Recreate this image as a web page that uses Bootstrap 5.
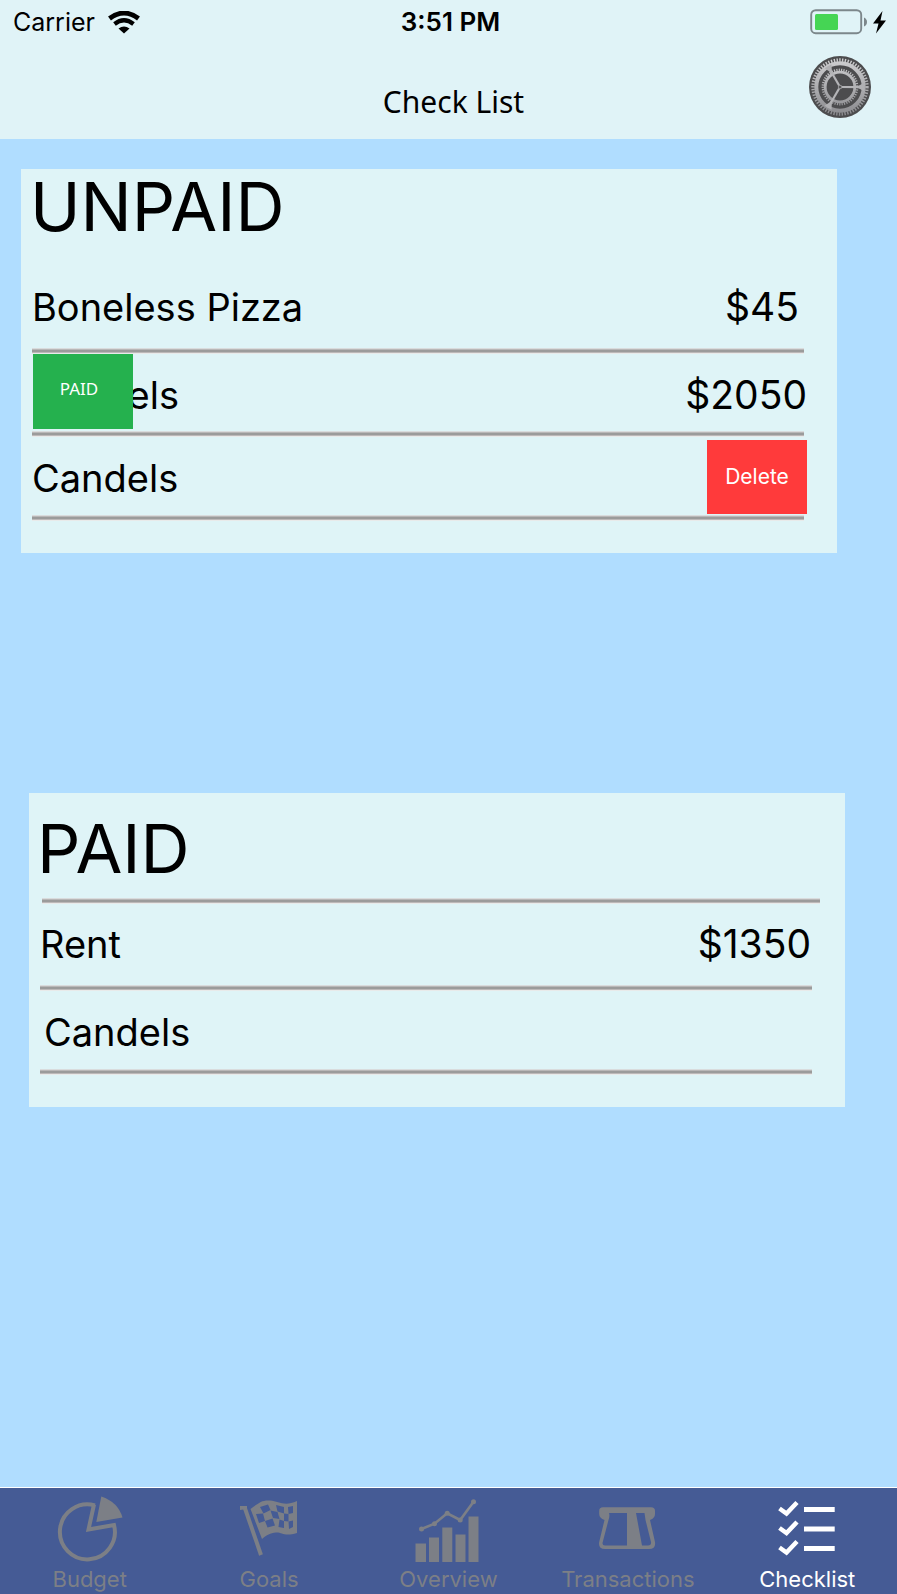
<!DOCTYPE html>
<html lang="en">
<head>
<meta charset="utf-8">
<meta name="viewport" content="width=device-width, initial-scale=1">
<title>Check List</title>
<link href="https://cdn.jsdelivr.net/npm/bootstrap@5.3.0/dist/css/bootstrap.min.css" rel="stylesheet">
<style>
  body { background: #b0ddff; color: #000; font-family: Inter, "Liberation Sans", sans-serif; }
  svg { display: block; flex: none; }
  .app-header { background: #e0f3f7; height: 139px; }
  .status-bar { height: 44px; padding: 2px 9px 0 13px; font-size: 25px; }
  .status-bar > * { flex: 1 1 0; }
  .clock { font-size: 26px; line-height: 36px; padding-bottom: 2px; }
  .title-bar { height: 95px; padding: 11px 26px 0; }
  .title-side { flex: 1 1 0; }
  .screen-title { font: 400 30px/40px "Noto Sans", "Open Sans", sans-serif; padding-top: 27px; margin-left: 10px; }
  .app-main { padding: 30px 52px 30px 21px; }
  .bill-panel { background: #dff4f7; padding-bottom: 32px; }
  .bill-panel + .bill-panel { margin-top: 240px; }
  .panel-unpaid { margin-right: 8px; }
  .panel-paid { margin-left: 8px; }
  .panel-title { font-size: 68px; font-weight: 400; line-height: 74px; padding: 0 0 24px 9px; }
  .ruled { background: linear-gradient(#d9dcdd 1px, #b9b7b7 1px 2px, #9b9b9b 2px 4px, #bcb8b8 4px 5px, #e8eaea 5px) left bottom / calc(100% - 3px) 6px no-repeat; }
  .panel-paid .panel-title { margin: 0 25px 0 8px; padding: 18px 0 19px 0; background-position: right bottom; background-size: calc(100% - 5px) 6px; }
  .bill-list { margin: 0 30px 0 11px; font-size: 38px; line-height: 48px; }
  .bill-row { height: 83px; padding-bottom: 2px; }
  .bill-row:last-child { height: 84px; }
  .bill-row.tall { height: 87px; padding-bottom: 8px; }
  .amount { font-size: 39px; }
  .swipe-btn { width: 100px; border: 0; border-radius: 0; color: #fff; padding: 0; }
  .btn-paid { height: 75px; background: #25b14e; font: 400 17px/24px "Noto Sans", "Open Sans", sans-serif; padding: 0 8px 6px 0; margin-left: 1px; }
  .btn-delete { height: 74px; background: #ff3a3b; font-size: 21px; line-height: 28px; margin-bottom: 2px; }
  .peek { width: 46px; }
  .tab-bar { background: #455b95; border-top: 1px solid #fff; padding: 6px 0 1px; font-size: 22px; line-height: 28px; }
  .tab-bar svg { margin-bottom: 1px; }
  .tab-bar a { color: #7c7f86; }
  .tab-bar a.active { color: #fff; }
</style>
</head>
<body class="d-flex flex-column min-vh-100">
<header class="app-header">
  <div class="status-bar d-flex align-items-center">
    <div class="d-flex align-items-center gap-2"><span class="pe-1">Carrier</span>
      <svg width="34" height="24" viewBox="0 0 34 24" fill="none" stroke="#000" role="img" aria-label="Wi-Fi">
        <path d="M2.500 7.500Q17-3.500 31.500 7.500" stroke-width="4.800"/><path d="M7.500 13Q17 5.500 26.500 13" stroke-width="4.200"/><path d="M11.500 17.500Q17 13.500 22.500 17.500L17 22.500Z" fill="#000" stroke="none"/>
      </svg>
    </div>
    <div class="clock text-center fw-semibold">3:51 PM</div>
    <div class="d-flex justify-content-end align-items-center">
      <svg width="78" height="28" viewBox="0 0 78 28" role="img" aria-label="Battery charging">
        <rect x="1.200" y="1.200" width="50" height="23" rx="4.500" fill="none" stroke="#7c878b" stroke-width="1.900"/>
        <rect x="5" y="5" width="23" height="16" rx="1.500" fill="#45d554"/>
        <path d="M54 8.500Q57 10 57 13t-3 4.500Z" fill="#7c878b"/>
        <path d="M72.500 2L63 14.500H68.500L66 24.500L76 11.500H70.500Z"/>
      </svg>
    </div>
  </div>
  <div class="title-bar d-flex align-items-start">
    <div class="title-side"></div>
    <h1 class="screen-title mb-0">Check List</h1>
    <div class="title-side d-flex justify-content-end">
      <button type="button" class="btn p-0 border-0" aria-label="Settings">
        <svg width="62" height="64" viewBox="-31 -32 62 64" fill="none">
          <defs><linearGradient id="steel" gradientUnits="userSpaceOnUse" x1="0" y1="-30" x2="0" y2="30"><stop offset="0" stop-color="#d2d2d4"/><stop offset="1" stop-color="#88888c"/></linearGradient></defs>
          <circle r="31" fill="#4c4c4e"/>
          <g stroke="url(#steel)">
            <circle r="23.700" stroke-width="4"/>
            <circle r="27" stroke-width="3.400" stroke-dasharray="1.400 1.400"/>
            <circle r="14.800" stroke-width="2.800"/>
            <circle r="17.200" stroke-width="2.400" stroke-dasharray="1.200 1.200"/>
          </g>
          <g stroke="#b4b4b7" stroke-width="2.200"><path d="M0 0L24 0.100"/><path d="M0 0L-12 -20.800"/><path d="M0 0L-12 20.800"/></g>
          <g fill="#b0b0b3"><path d="M18-1L24-4V4L18 1Z"/><path d="M18-1L24-4V4L18 1Z" transform="rotate(120)"/><path d="M18-1L24-4V4L18 1Z" transform="rotate(240)"/></g>
          <circle r="2.200" fill="#929295"/><circle r="1" fill="#444"/>
        </svg>
      </button>
    </div>
  </div>
</header>

<main class="app-main flex-grow-1">
  <section class="bill-panel panel-unpaid">
    <h2 class="panel-title mb-0">UNPAID</h2>
    <ul class="bill-list list-unstyled mb-0">
      <li class="bill-row tall ruled d-flex justify-content-between align-items-center"><span>Boneless Pizza</span><span class="amount pe-2">$45</span></li>
      <li class="bill-row ruled d-flex align-items-start">
        <button type="button" class="btn swipe-btn btn-paid">PAID</button>
        <span class="peek align-self-center d-flex justify-content-end overflow-hidden">els</span><span class="amount align-self-center ms-auto">$2050</span></li>
      <li class="bill-row ruled d-flex justify-content-between align-items-center"><span>Candels</span>
        <button type="button" class="btn swipe-btn btn-delete">Delete</button></li>
    </ul>
  </section>

  <section class="bill-panel panel-paid">
    <h2 class="panel-title ruled">PAID</h2>
    <ul class="bill-list list-unstyled mb-0">
      <li class="bill-row tall ruled d-flex justify-content-between align-items-center"><span>Rent</span><span class="amount pe-1">$1350</span></li>
      <li class="bill-row ruled d-flex align-items-center"><span class="ps-1">Candels</span></li>
    </ul>
  </section>
</main>

<nav class="tab-bar">
  <div class="row g-0 row-cols-5 text-center">
    <a href="#budget" class="col text-decoration-none d-flex flex-column align-items-center">
      <svg width="70" height="70" viewBox="0 0 70 70"><path d="M40 11.500A27.500 27.500 0 1 0 59 31L33.500 35.500L39 10.500" fill="none" stroke="currentColor" stroke-width="4"/><path d="M46.300 2.500Q63 8 67.500 23.500L41.300 28Z" fill="currentColor"/></svg>
      <span>Budget</span></a>
    <a href="#goals" class="col text-decoration-none d-flex flex-column align-items-center">
      <svg width="70" height="70" viewBox="0 0 70 70" fill="currentColor"><path d="M10.500 13L27 61" fill="none" stroke="currentColor" stroke-width="4"/><path d="M6 12L13 12V15L6 16Z"/>
        <path d="M16.500 15C25 9 27 6 36 6.500S50 13 63 7V39C50 43 48 38 42 38.500S33 41 28 45Z"/>
        <g fill="#455b95"><path d="M26 13L34 10.500L36.500 16L29.500 19.500Z"/><path d="M42 11L50 13V19.500L43.500 17.500Z"/><path d="M54 13L59 12V19L54.500 20Z"/><path d="M22 20L29 19.500L31 27L25 29Z"/><path d="M36.500 16.500L43.500 18L45.500 25L39 24Z"/><path d="M50 19.500L54.500 20V27.500L50 27Z"/><path d="M31 27L38.500 24.500L41 31.500L33.500 33.500Z"/><path d="M45.500 25.500L50 27V34L44.500 33Z"/><path d="M54.500 27.500L59 26.500V33L55 35Z"/></g></svg>
      <span>Goals</span></a>
    <a href="#overview" class="col text-decoration-none d-flex flex-column align-items-center">
      <svg width="70" height="70" viewBox="0 0 70 70" fill="currentColor"><path d="M2.500 49.500h10.500V68H2.500ZM16 43.500h10V68H16ZM29.300 33.500h10V68H29.300ZM42.500 40.500h10V68H42.500ZM55.500 22.500h10V68H55.500Z"/><path d="M8.500 35L21.500 29.700L34.200 19.300L47.200 26L60.500 7.700" fill="none" stroke="currentColor" stroke-width="2.600"/><circle cx="8.500" cy="35" r="2.500"/><circle cx="21.500" cy="29.700" r="2.500"/><circle cx="34.200" cy="19.300" r="2.500"/><circle cx="47.200" cy="26" r="2.500"/><circle cx="60.500" cy="7.700" r="2.500"/></svg>
      <span>Overview</span></a>
    <a href="#transactions" class="col text-decoration-none d-flex flex-column align-items-center">
      <svg width="70" height="70" viewBox="0 0 70 70" fill="currentColor" fill-rule="evenodd"><path d="M10 13.300H58Q62 13.300 62 17V20Q62 24 57 26L62 48Q63 55 56 55H12Q5 55 6.200 48L11.500 26Q6.200 24 6.200 20V17Q6.200 13.300 10 13.300ZM16 19Q17 22 15.500 26L9.500 49Q9.300 51.500 12 51.500H34V19ZM43 19L49 51.500H55Q58.500 51.500 58 48L52.500 26L51.500 19Z"/></svg>
      <span>Transactions</span></a>
    <a href="#checklist" class="col active text-decoration-none d-flex flex-column align-items-center" aria-current="page">
      <svg width="70" height="70" viewBox="0 0 70 70" fill="none" stroke="currentColor"><path d="M7.500 14.500L14.500 19.500L25 8.500M7.500 34L14.500 39L25 28M7.500 53.500L14.500 58.500L25 47.500" stroke-width="4.500"/><path d="M32 15.500H62.700M32 35H62.700M32 54.500H62.700" stroke-width="5"/></svg>
      <span>Checklist</span></a>
  </div>
</nav>
<script src="https://cdn.jsdelivr.net/npm/bootstrap@5.3.0/dist/js/bootstrap.bundle.min.js"></script>
</body>
</html>
